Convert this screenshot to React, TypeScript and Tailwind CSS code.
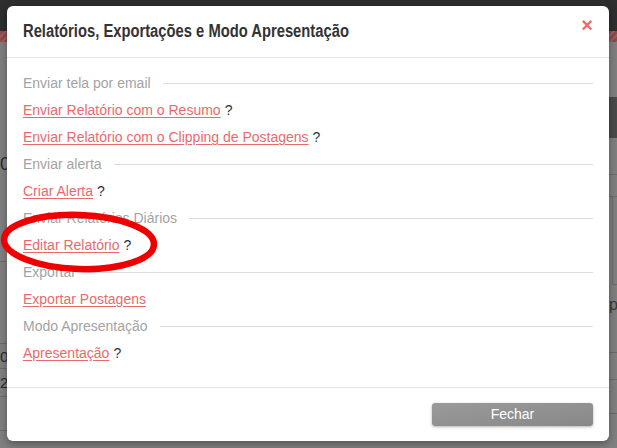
import React from "react";

type Item =
  | { kind: "section"; label: string }
  | { kind: "link"; label: string; help?: boolean };

const items: Item[] = [
  { kind: "section", label: "Enviar tela por email" },
  { kind: "link", label: "Enviar Relatório com o Resumo", help: true },
  { kind: "link", label: "Enviar Relatório com o Clipping de Postagens", help: true },
  { kind: "section", label: "Enviar alerta" },
  { kind: "link", label: "Criar Alerta", help: true },
  { kind: "section", label: "Enviar Relatórios Diários" },
  { kind: "link", label: "Editar Relatório", help: true },
  { kind: "section", label: "Exportar" },
  { kind: "link", label: "Exportar Postagens" },
  { kind: "section", label: "Modo Apresentação" },
  { kind: "link", label: "Apresentação", help: true },
];

// ─── Background page (dimmed) ────────────────────────────────────────────────

function BackgroundPage() {
  return (
    <div className="flex h-[448px] w-[617px] flex-col bg-[#808080]">
      <div className="h-[31px] shrink-0 bg-[#2e2e2e]" />
      <div className="h-[11px] shrink-0 bg-[repeating-linear-gradient(135deg,#8c4c4c_0px,#8c4c4c_3px,#9e5e5e_3px,#9e5e5e_5px)]" />
      <div className="flex flex-1 justify-between">
        {/* left strip */}
        <div className="flex w-[7px] flex-col text-[#1f2a36]">
          <div className="h-[110px]" />
          <div className="flex h-[24px] items-center overflow-hidden text-[18px] leading-none">0</div>
          <div className="h-[86px] border-b border-[#6c6c6c]" />
          <div className="h-[82px] border-b border-[#6c6c6c]" />
          <div className="flex h-[25px] items-center overflow-hidden border-b border-[#6c6c6c] text-[15px] leading-none">
            0
          </div>
          <div className="flex h-[28px] items-center overflow-hidden border-b border-[#6c6c6c] text-[15px] leading-none text-[#2a2a2a]">
            2
          </div>
          <div className="h-[34px] border-b border-[#6c6c6c]" />
        </div>

        {/* right strip */}
        <div className="flex w-[8px] flex-col">
          <div className="h-[55px]" />
          <div className="h-[41px] bg-[#4a4a4a]" />
          <div className="h-[37px] border-b border-[#6c6c6c]" />
          <div className="h-[22px] border-b border-[#6c6c6c]" />
          <div className="ml-[3px] h-[88px] border-b border-l border-[#6c6c6c]" />
          <div className="flex h-[40px] items-center overflow-hidden text-[16px] leading-none text-[#3a3a3a]">
            p
          </div>
          <div className="h-[28px] border-b border-[#6c6c6c]" />
          <div className="h-[27px] border-b border-[#6c6c6c]" />
          <div className="h-[34px] border-b border-[#6c6c6c]" />
        </div>
      </div>
    </div>
  );
}

// ─── Modal rows ──────────────────────────────────────────────────────────────

function SectionRow({ label }: { label: string }) {
  return (
    <div className="flex h-[27px] items-center">
      <span className="text-[#a3a3a3]">{label}</span>
      <span className="ml-3 h-px flex-1 bg-[#dcdcdc]" />
    </div>
  );
}

function LinkRow({ label, help }: { label: string; help?: boolean }) {
  return (
    <div className="flex h-[27px] items-center">
      <a className="text-[#ea6a6c] underline underline-offset-2" href="#">
        {label}
      </a>
      {help && <span className="ml-1 text-[#2b3440]">?</span>}
    </div>
  );
}

// ─── Main ────────────────────────────────────────────────────────────────────

export default function App() {
  return (
    <div className="relative h-[448px] w-[617px] overflow-hidden font-['Liberation_Sans',Arial,sans-serif] text-[14px]">
      <BackgroundPage />

      <div className="absolute left-[7px] top-[6px] flex h-[435px] w-[602px] flex-col rounded-[6px] bg-white shadow-[0_3px_9px_rgba(0,0,0,0.35)]">
        <div className="flex h-[52px] items-center justify-between border-b border-[#e5e5e5] px-4">
          <h2 className="origin-left scale-x-[0.82] whitespace-nowrap text-[18px] font-bold text-[#333]">
            Relatórios, Exportações e Modo Apresentação
          </h2>
          <button
            aria-label="Fechar"
            className="-mt-[14px] text-[20px] font-bold leading-none text-[#f06a6a]"
            type="button"
          >
            ×
          </button>
        </div>

        <div className="border-b border-[#e5e5e5] px-4 pb-5 pt-3">
          {items.map((item, i) =>
            item.kind === "section" ? (
              <SectionRow key={i} label={item.label} />
            ) : (
              <LinkRow help={item.help} key={i} label={item.label} />
            ),
          )}
        </div>

        <div className="flex flex-1 items-center justify-end px-4">
          <button
            className="h-[23px] w-[161px] rounded-[3px] bg-gradient-to-br from-[#9a9a9a] to-[#888] text-[14px] text-white shadow-[0_1px_3px_rgba(0,0,0,0.3)]"
            type="button"
          >
            Fechar
          </button>
        </div>
      </div>

      <svg
        className="pointer-events-none absolute left-0 top-0"
        height="448"
        width="617"
      >
        <ellipse
          cx="79"
          cy="242"
          fill="none"
          rx="75"
          ry="27"
          stroke="#ee0000"
          strokeWidth="6.5"
          transform="rotate(2 79 242)"
        />
      </svg>
    </div>
  );
}
